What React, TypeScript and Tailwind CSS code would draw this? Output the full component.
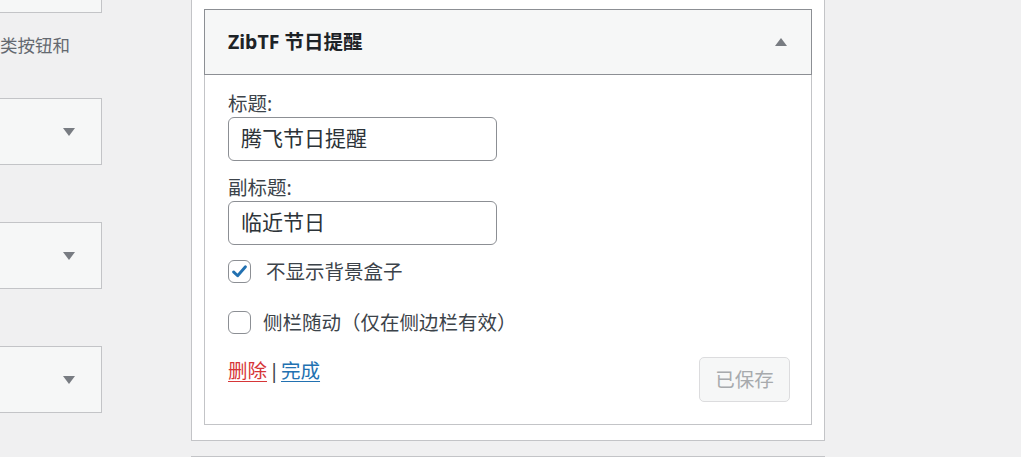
import React from "react";

const FONT = '"Noto Sans", "Noto Sans CJK SC", sans-serif';

function Caret({ up = false }: { up?: boolean }) {
  return (
    <svg width="12" height="8" viewBox="0 0 12 8" aria-hidden="true">
      {up ? <path d="M0 8 L6 0 L12 8 Z" fill="#787c82" /> : <path d="M0 0 L12 0 L6 8 Z" fill="#787c82" />}
    </svg>
  );
}

function SideBox({ className = "" }: { className?: string }) {
  return (
    <div
      className={`h-[67px] shrink-0 border-y border-r border-[#c3c4c7] bg-[#f6f7f7] flex items-center justify-end pr-[26px] ${className}`}
    >
      <Caret />
    </div>
  );
}

function Checkbox({ checked }: { checked?: boolean }) {
  return (
    <span className="w-[23px] h-[23px] shrink-0 rounded-[6px] border border-[#8c8f94] bg-white flex items-center justify-center">
      {checked && (
        <svg width="17" height="17" viewBox="0 0 20 20" aria-hidden="true">
          <path d="M3 10.5 L7.8 15 L17 4.5" fill="none" stroke="#2271b1" strokeWidth="3.4" strokeLinecap="round" strokeLinejoin="round" />
        </svg>
      )}
    </span>
  );
}

export default function App() {
  return (
    <div className="w-[1021px] h-[457px] overflow-hidden bg-[#f0f0f1] flex" style={{ fontFamily: FONT }}>
      {/* left column, clipped at the window edge */}
      <div className="w-[102px] shrink-0 flex flex-col">
        <div className="h-[13px] shrink-0 border-b border-r border-[#c3c4c7] bg-[#f6f7f7]" />
        <p className="mt-[19px] text-[17.5px] leading-[27px] text-[#646970] whitespace-nowrap">类按钮和</p>
        <SideBox className="mt-[39px]" />
        <SideBox className="mt-[57px]" />
        <SideBox className="mt-[57px]" />
      </div>

      {/* sidebar panel */}
      <div className="ml-[89px] w-[634px] shrink-0 flex flex-col">
        <div className="h-[441px] shrink-0 border-x border-b border-[#c3c4c7] bg-white px-3 pt-[9px]">
          <div className="w-[608px]">
            <div className="h-[66px] border border-[#8c8f94] bg-[#f6f7f7] flex items-center justify-between pl-[23px] pr-[24px]">
              <h3 className="text-[19.5px] font-bold text-[#1d2327] leading-none">ZibTF 节日提醒</h3>
              <Caret up />
            </div>
            <div className="border-x border-b border-[#c3c4c7] px-[23px] pt-[15px] pb-[22px] text-[#3c434a]">
              <label className="block text-[19.5px] leading-[27px]">标题:</label>
              <div className="w-[269px] h-[44px] rounded-[6px] border border-[#8c8f94] px-3 flex items-center text-[21px] text-[#2c3338]">
                腾飞节日提醒
              </div>
              <label className="block mt-[13px] text-[19.5px] leading-[27px]">副标题:</label>
              <div className="w-[269px] h-[44px] rounded-[6px] border border-[#8c8f94] px-3 flex items-center text-[21px] text-[#2c3338]">
                临近节日
              </div>
              <div className="mt-[15px] h-[23px] flex items-center">
                <Checkbox checked />
                <span className="ml-[15px] text-[19.5px] leading-none">不显示背景盒子</span>
              </div>
              <div className="mt-[28px] h-[23px] flex items-center">
                <Checkbox />
                <span className="ml-[12px] text-[19.5px] leading-none">侧栏随动（仅在侧边栏有效）</span>
              </div>
              <div className="mt-[23px] flex items-start justify-between">
                <div className="flex text-[19.5px] leading-[27px]">
                  <a className="text-[#d63638] underline underline-offset-[3px]">删除</a>
                  <span className="w-[14px] text-center text-[#3c434a]">|</span>
                  <a className="text-[#2271b1] underline underline-offset-[3px]">完成</a>
                </div>
                <button
                  disabled
                  className="w-[91px] h-[45px] mr-[-2px] rounded-[5px] border border-[#dcdcde] bg-[#f6f7f7] text-[19.5px] text-[#a7aaad]"
                >
                  已保存
                </button>
              </div>
            </div>
          </div>
        </div>
        <div className="mt-[15px] h-[20px] shrink-0 border-t border-x border-[#c3c4c7] bg-white" />
      </div>
    </div>
  );
}
